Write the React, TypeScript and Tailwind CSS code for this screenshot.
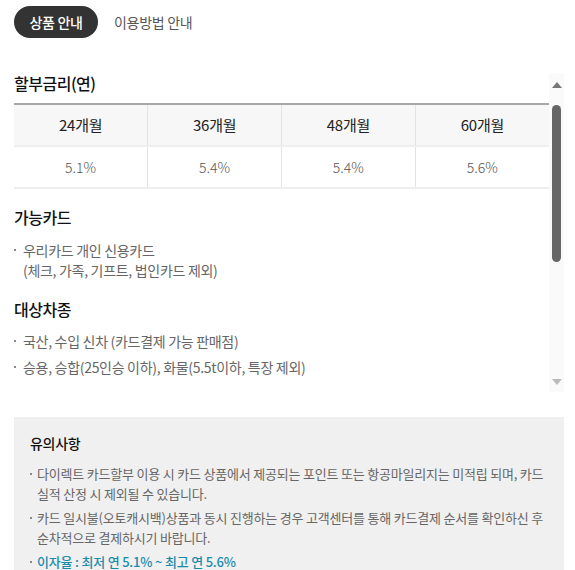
import React from 'react';

const rates = [
  { term: '24개월', rate: '5.1%' },
  { term: '36개월', rate: '5.4%' },
  { term: '48개월', rate: '5.4%' },
  { term: '60개월', rate: '5.6%' },
];

const Bullet: React.FC<{ children: React.ReactNode }> = ({ children }) => (
  <li className="flex">
    <span className="w-[9px] shrink-0 pt-[9px]">
      <span className="block h-[2px] w-[2px] bg-[#888]" />
    </span>
    <span>{children}</span>
  </li>
);

const NoteItem: React.FC<{ children: React.ReactNode; className?: string }> = ({ children, className }) => (
  <li className={`flex ${className ?? ''}`}>
    <span className="w-[7px] shrink-0 pt-[9px]">
      <span className="block h-[2px] w-[2px] bg-[#888]" />
    </span>
    <span>{children}</span>
  </li>
);

export default function App() {
  return (
    <div
      className="w-[575px] h-[570px] overflow-hidden bg-white text-[#666]"
      style={{ fontFamily: '"Noto Sans CJK KR", "Noto Sans", sans-serif' }}
    >
      {/* Tabs */}
      <div className="flex items-center pl-[14px] pt-[6px] tracking-[-0.3px]">
        <button className="h-[32px] w-[84px] rounded-full bg-[#333] text-[14px] font-medium text-white">
          상품 안내
        </button>
        <button className="ml-[16px] text-[14px] text-[#555]">이용방법 안내</button>
      </div>

      {/* Scroll area */}
      <div className="mt-[35px] ml-[14px] flex h-[319px] w-[550px]">
        <div className="w-[535px]">
          <h3 className="text-[16px] leading-[20px] font-medium tracking-[-0.5px] text-[#111]">할부금리(연)</h3>
          <table className="mt-[10px] w-full table-fixed border-t-2 border-[#a8a8a8] text-center">
            <thead>
              <tr className="h-[42px] bg-[#f7f7f7] text-[15px] text-[#222]">
                {rates.map((r, i) => (
                  <th key={r.term} className={`font-normal tracking-[-0.3px] ${i > 0 ? 'border-l border-[#e3e3e3]' : ''}`}>
                    {r.term}
                  </th>
                ))}
              </tr>
            </thead>
            <tbody>
              <tr className="h-[42px] border-y-2 border-[#eeeeee] text-[14px] font-light text-[#555]">
                {rates.map((r, i) => (
                  <td key={r.term} className={i > 0 ? 'border-l border-[#e3e3e3]' : ''}>
                    {r.rate}
                  </td>
                ))}
              </tr>
            </tbody>
          </table>

          <h3 className="mt-[18px] text-[16px] leading-[20px] font-medium tracking-[-0.5px] text-[#111]">가능카드</h3>
          <ul className="mt-[13px] text-[14px] leading-[20px] tracking-[-0.3px]">
            <Bullet>
              우리카드 개인 신용카드
              <br />
              (체크, 가족, 기프트, 법인카드 제외)
            </Bullet>
          </ul>

          <h3 className="mt-[19px] text-[16px] leading-[20px] font-medium tracking-[-0.5px] text-[#111]">대상차종</h3>
          <ul className="mt-[12px] flex flex-col gap-[6px] text-[14px] leading-[20px] tracking-[-0.3px]">
            <Bullet>국산, 수입 신차 (카드결제 가능 판매점)</Bullet>
            <Bullet>승용, 승합(25인승 이하), 화물(5.5t이하, 특장 제외)</Bullet>
          </ul>
        </div>

        {/* Scrollbar */}
        <div className="flex w-[15px] flex-col items-center bg-[#fafafa]">
          <div className="mt-[9px] h-0 w-0 border-x-[5px] border-b-[6px] border-x-transparent border-b-[#777]" />
          <div className="mt-[17px] h-[157px] w-[9px] rounded-full bg-[#666]" />
          <div className="mt-auto mb-[7px] h-0 w-0 border-x-[5px] border-t-[6px] border-x-transparent border-t-[#bbb]" />
        </div>
      </div>

      {/* Notice */}
      <div className="mt-[25px] ml-[14px] w-[550px] bg-[#f0f0f0] px-[16px] pt-[16px] pb-[20px]">
        <h4 className="text-[14px] leading-[20px] font-medium tracking-[-0.3px] text-[#111]">유의사항</h4>
        <ul className="mt-[11px] flex flex-col gap-[4px] text-[13px] leading-[20px] tracking-[-0.2px] break-keep">
          <NoteItem>
            다이렉트 카드할부 이용 시 카드 상품에서 제공되는 포인트 또는 항공마일리지는 미적립 되며, 카드 실적 산정 시 제외될 수 있습니다.
          </NoteItem>
          <NoteItem>
            카드 일시불(오토캐시백)상품과 동시 진행하는 경우 고객센터를 통해 카드결제 순서를 확인하신 후 순차적으로 결제하시기 바랍니다.
          </NoteItem>
          <NoteItem className="font-medium text-[#1a8cab]">이자율 : 최저 연 5.1% ~ 최고 연 5.6%</NoteItem>
        </ul>
      </div>
    </div>
  );
}
